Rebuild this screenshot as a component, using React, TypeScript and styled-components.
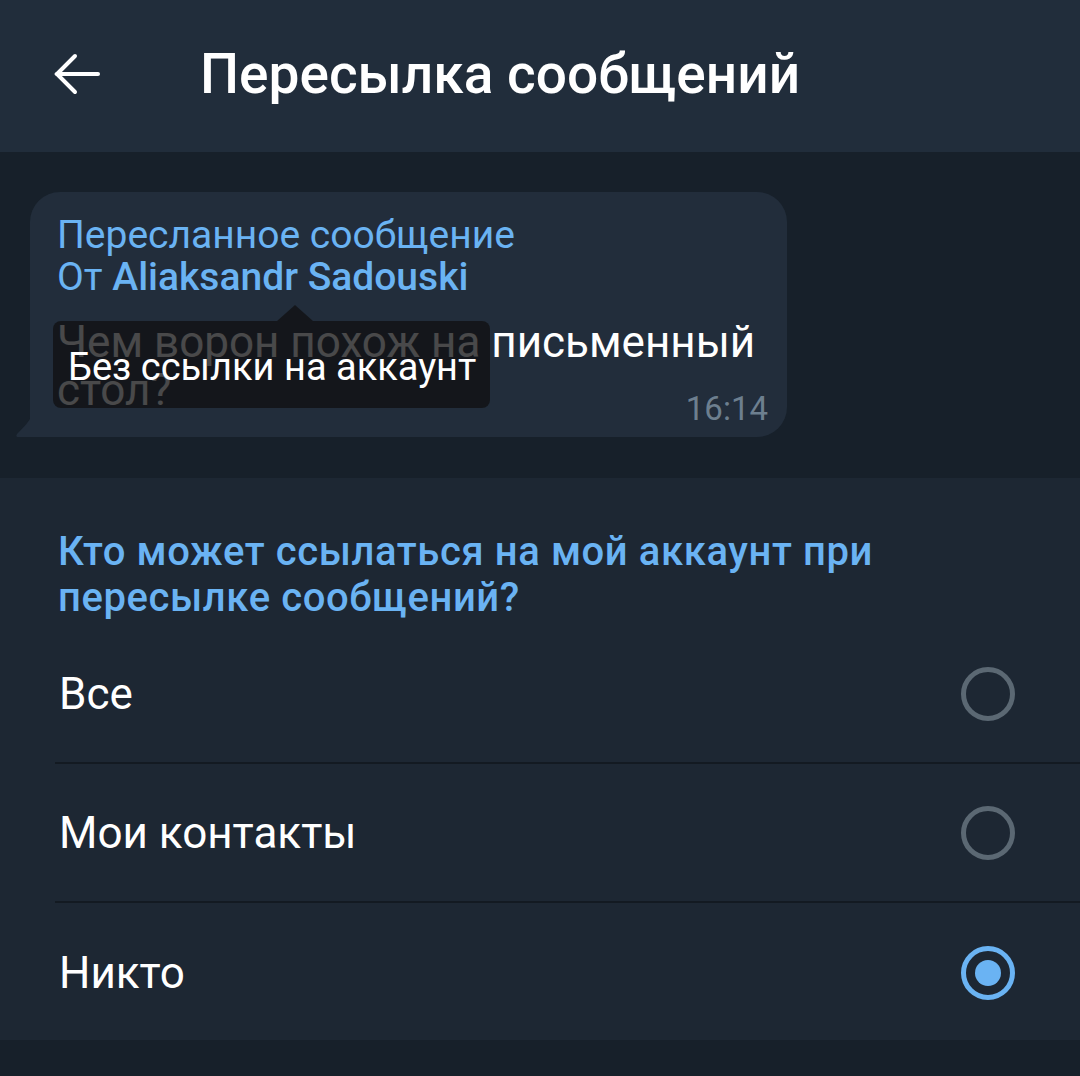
import React from "react";
import styled, { createGlobalStyle } from "styled-components";

const Global = createGlobalStyle`
  html, body { margin: 0; padding: 0; background: #17202a; }
  body { font-family: Roboto, "Noto Sans", sans-serif; }
  * { box-sizing: border-box; }
`;

const Page = styled.div`
  width: 1080px;
  height: 1076px;
  background: #17202a;
  display: flex;
  flex-direction: column;
  overflow: hidden;
`;

const Header = styled.header`
  height: 152px;
  background: #212d3b;
  display: flex;
  align-items: center;
  padding-left: 52px;
  flex-shrink: 0;
`;

const BackIcon = styled.svg`
  display: block;
  flex-shrink: 0;
  margin-right: 100px;
  margin-top: -4px;
`;

const Title = styled.h1`
  margin: 0;
  color: #ffffff;
  font-family: Roboto, sans-serif;
  font-weight: 500;
  font-size: 55px;
  line-height: 64px;
  margin-top: -4px;
`;

const Preview = styled.section`
  height: 326px;
  padding: 40px 0 0 16px;
  flex-shrink: 0;
`;

const BubbleWrap = styled.div`
  position: relative;
  width: 771px;
  padding-left: 14px;
`;

const Bubble = styled.div`
  position: relative;
  width: 757px;
  height: 245px;
  background: #222d3b;
  border-radius: 30px 30px 30px 0;
  padding: 22px 14px 0 27px;
`;

const Tail = styled.svg`
  position: absolute;
  left: 0;
  bottom: 0;
`;

const FwdLine = styled.div`
  color: #6ab3f3;
  font-size: 39px;
  line-height: 42px;
  white-space: nowrap;
`;

const Name = styled.span`
  font-weight: 500;
`;

const MessageText = styled.div`
  margin-top: 20px;
  color: #ffffff;
  font-size: 44px;
  line-height: 48px;
`;

const Time = styled.div`
  position: absolute;
  right: 19px;
  bottom: 9px;
  color: #6d7f8f;
  font-size: 33px;
  line-height: 38px;
`;

const Tooltip = styled.div`
  position: absolute;
  left: 23px;
  top: 129px;
  width: 437px;
  height: 87px;
  background: rgba(16, 16, 17, 0.76);
  border-radius: 8px;
  padding: 24px 0 0 15px;
  &::before {
    content: "";
    position: absolute;
    left: 224px;
    top: -16px;
    border-left: 18px solid transparent;
    border-right: 18px solid transparent;
    border-bottom: 16px solid rgba(16, 16, 17, 0.76);
  }
`;

const TooltipText = styled.div`
  color: #ffffff;
  font-size: 38px;
  line-height: 44px;
  white-space: nowrap;
`;

const Settings = styled.section`
  background: #1d2733;
  height: 562px;
  flex-shrink: 0;
  padding-top: 51px;
`;

const SectionTitle = styled.h2`
  margin: 0 0 0 58px;
  color: #6ab3f3;
  font-weight: 500;
  font-size: 40px;
  line-height: 46px;
  letter-spacing: 0.6px;
  max-width: 890px;
`;

const List = styled.div`
  margin-top: 4px;
`;

const Row = styled.div<{ $last?: boolean }>`
  height: 139px;
  margin-left: 55px;
  padding: 0 65px 0 4px;
  display: flex;
  align-items: center;
  justify-content: space-between;
  border-bottom: ${(p) => (p.$last ? "none" : "2px solid #131a22")};
`;

const RowLabel = styled.span`
  color: #ffffff;
  font-size: 44px;
`;

const Radio = styled.div<{ $checked?: boolean }>`
  width: 54px;
  height: 54px;
  border-radius: 50%;
  border: 5px solid ${(p) => (p.$checked ? "#6ab3f3" : "#5b6873")};
  display: flex;
  align-items: center;
  justify-content: center;
  &::after {
    content: "";
    display: ${(p) => (p.$checked ? "block" : "none")};
    width: 26px;
    height: 26px;
    border-radius: 50%;
    background: #6ab3f3;
  }
`;

const options = [
  { label: "Все", checked: false },
  { label: "Мои контакты", checked: false },
  { label: "Никто", checked: true },
];

export default function App() {
  return (
    <>
      <Global />
      <Page>
        <Header>
          <BackIcon width="48" height="48" viewBox="0 0 48 48" fill="none" stroke="#ffffff" strokeWidth="4" strokeLinecap="round" strokeLinejoin="miter">
            <path d="M5 24H46" />
            <path d="M23 6L5 24l18 18" />
          </BackIcon>
          <Title>Пересылка сообщений</Title>
        </Header>
        <Preview>
          <BubbleWrap>
            <Tail width="16" height="22" viewBox="0 0 16 22">
              <path d="M16 0 V22 H2 C0 22 0 20 1.5 18.5 C8 12 13 7 16 0 Z" fill="#222d3b" />
            </Tail>
            <Bubble>
              <FwdLine>Пересланное сообщение</FwdLine>
              <FwdLine>
                От <Name>Aliaksandr Sadouski</Name>
              </FwdLine>
              <MessageText>Чем ворон похож на письменный стол?</MessageText>
              <Time>16:14</Time>
              <Tooltip>
                <TooltipText>Без ссылки на аккаунт</TooltipText>
              </Tooltip>
            </Bubble>
          </BubbleWrap>
        </Preview>
        <Settings>
          <SectionTitle>Кто может ссылаться на мой аккаунт при пересылке сообщений?</SectionTitle>
          <List>
            {options.map((o, i) => (
              <Row key={o.label} $last={i === options.length - 1}>
                <RowLabel>{o.label}</RowLabel>
                <Radio $checked={o.checked} />
              </Row>
            ))}
          </List>
        </Settings>
      </Page>
    </>
  );
}
